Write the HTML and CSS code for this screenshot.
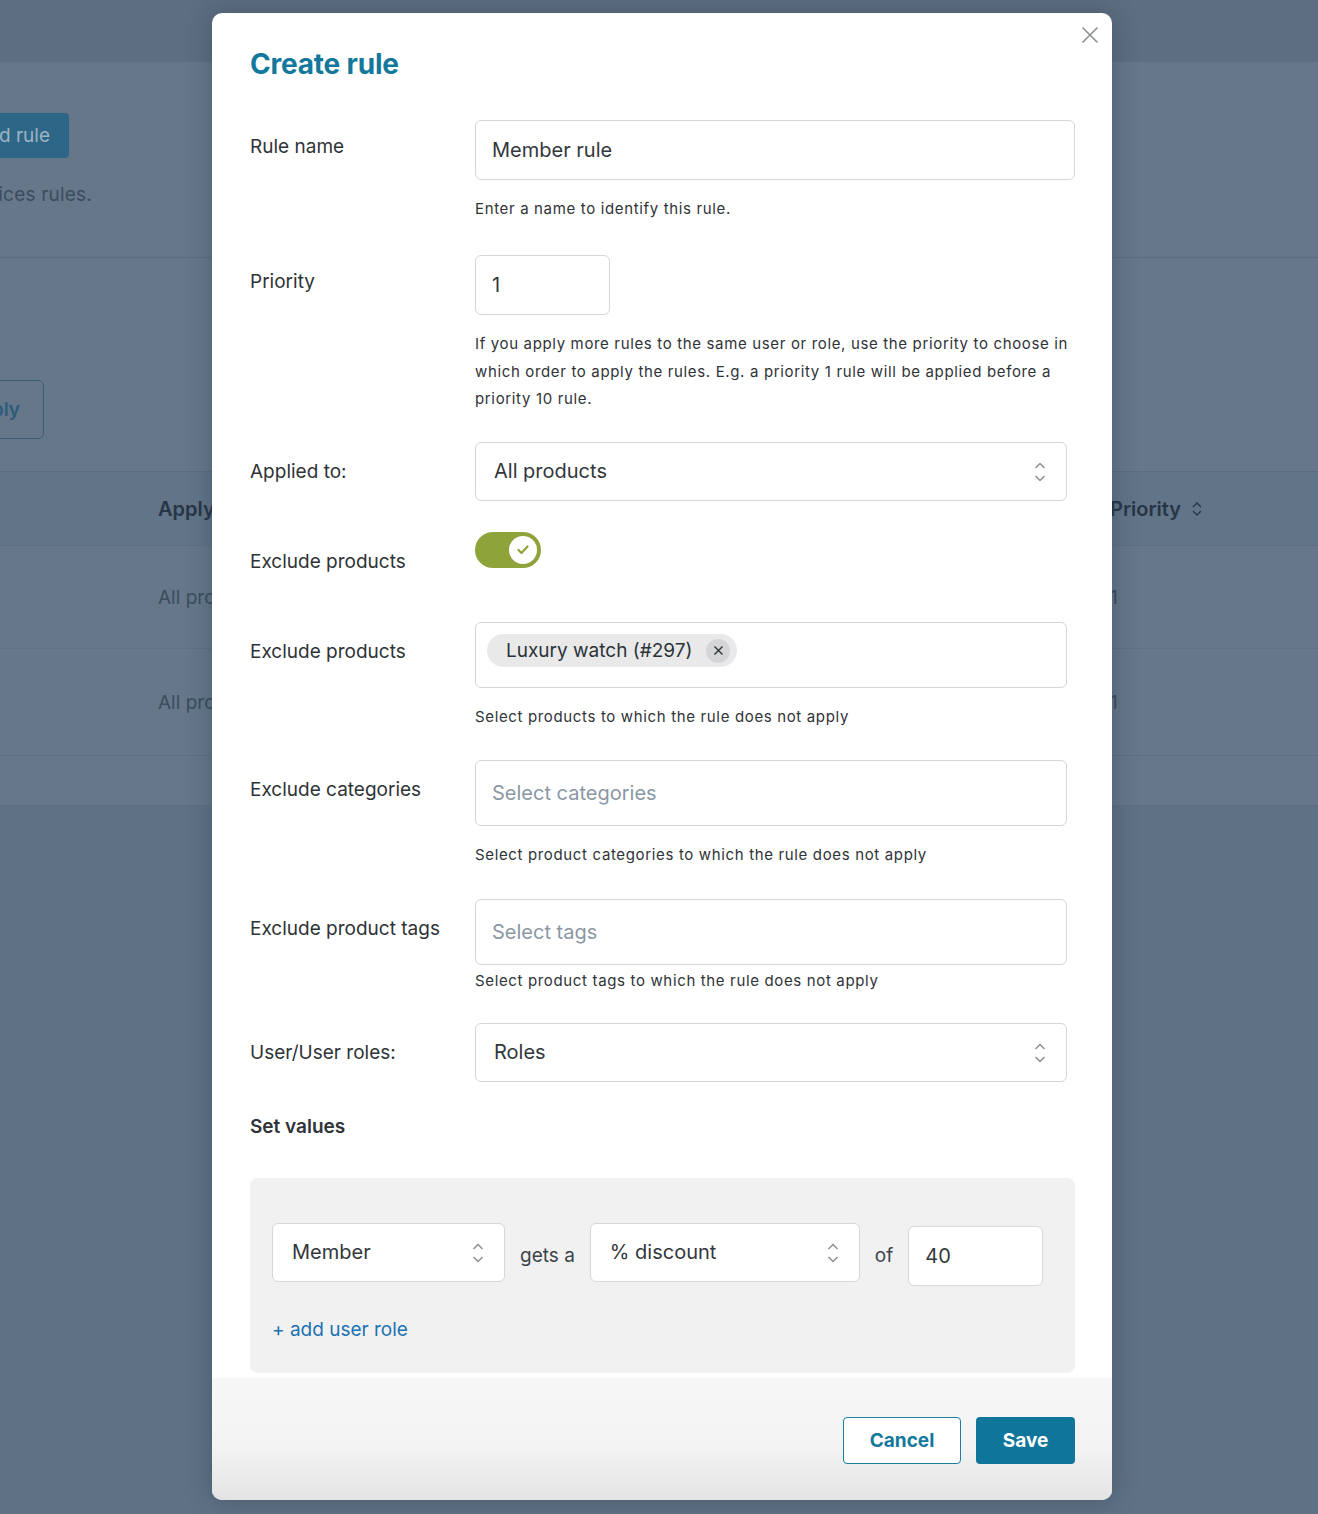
FILE: index.html
```html
<!DOCTYPE html>
<html lang="en">
<head>
    <meta charset="UTF-8">
    <title>Create rule</title>
    <link rel="stylesheet" href="styles.css">
</head>
<body>
    <div class="page">
        <div class="topbar"></div>
        <div class="intro">
            <div class="edge-box"><span class="btn-add">Add rule</span></div>
            <div class="edge-box edge-text">Manage your prices rules.</div>
        </div>
        <div class="filters">
            <div class="edge-box edge-small"><span class="btn-apply">Apply</span></div>
        </div>
        <div class="table">
            <div class="table-row table-head">
                <span class="col-apply">Apply to</span>
                <span class="col-priority">Priority
                    <svg width="12" height="16" viewBox="0 0 12 16"><path d="M2 6l4-4 4 4M2 10l4 4 4-4" fill="none" stroke="#2a3a4b" stroke-width="1.5"/></svg>
                </span>
            </div>
            <div class="table-row row-a"><span class="col-apply">All products</span><span class="col-priority">1</span></div>
            <div class="table-row row-b"><span class="col-apply">All products</span><span class="col-priority">1</span></div>
            <div class="table-row table-foot"></div>
        </div>
    </div>

    <div class="modal">
        <div class="modal-body">
            <button class="close" aria-label="Close">
                <svg width="18" height="18" viewBox="0 0 18 18"><path d="M1.5 1.5l15 15M16.5 1.5l-15 15" stroke="#8c8f94" stroke-width="1.6"/></svg>
            </button>
            <h2 class="title">Create rule</h2>

            <div class="form-row row-name">
                <label class="label label-top">Rule name</label>
                <div>
                    <div class="field field-wide">Member rule</div>
                    <p class="help">Enter a name to identify this rule.</p>
                </div>
            </div>

            <div class="form-row row-priority">
                <label class="label label-top">Priority</label>
                <div>
                    <div class="field field-small">1</div>
                    <p class="help help-long">If you apply more rules to the same user or role, use the priority to choose in which order to apply the rules. E.g. a priority 1 rule will be applied before a priority 10 rule.</p>
                </div>
            </div>

            <div class="form-row row-applied">
                <label class="label">Applied to:</label>
                <div class="field select">All products
                    <svg class="arrows" width="12" height="22" viewBox="0 0 12 22"><path d="M1.5 7l4.5-4.5 4.5 4.5M1.5 15l4.5 4.5 4.5-4.5" fill="none" stroke="#8c8f94" stroke-width="1.5"/></svg>
                </div>
            </div>

            <div class="form-row row-toggle">
                <label class="label">Exclude products</label>
                <div>
                    <span class="toggle">
                        <span class="knob">
                            <svg width="12" height="10" viewBox="0 0 12 10"><path d="M1.5 5l3 3 6-6.5" fill="none" stroke="#8ea33a" stroke-width="2.2" stroke-linecap="round" stroke-linejoin="round"/></svg>
                        </span>
                    </span>
                </div>
            </div>

            <div class="form-row">
                <label class="label">Exclude products</label>
                <div>
                    <div class="field multi">
                        <span class="chip">Luxury watch (#297)
                            <span class="chip-x">
                                <svg width="11" height="11" viewBox="0 0 11 11"><path d="M1.5 1.5l8 8M9.5 1.5l-8 8" stroke="#2c3338" stroke-width="1.4"/></svg>
                            </span>
                        </span>
                    </div>
                    <p class="help">Select products to which the rule does not apply</p>
                </div>
            </div>

            <div class="form-row row-categories">
                <label class="label">Exclude categories</label>
                <div>
                    <div class="field multi placeholder">Select categories</div>
                    <p class="help">Select product categories to which the rule does not apply</p>
                </div>
            </div>

            <div class="form-row row-tags">
                <label class="label">Exclude product tags</label>
                <div>
                    <div class="field multi placeholder">Select tags</div>
                    <p class="help help-tight">Select product tags to which the rule does not apply</p>
                </div>
            </div>

            <div class="form-row row-roles">
                <label class="label">User/User roles:</label>
                <div class="field select">Roles
                    <svg class="arrows" width="12" height="22" viewBox="0 0 12 22"><path d="M1.5 7l4.5-4.5 4.5 4.5M1.5 15l4.5 4.5 4.5-4.5" fill="none" stroke="#8c8f94" stroke-width="1.5"/></svg>
                </div>
            </div>

            <h3 class="section-title">Set values</h3>

            <div class="values">
                <div class="values-row">
                    <div class="field select select-role">Member
                        <svg class="arrows" width="12" height="22" viewBox="0 0 12 22"><path d="M1.5 7l4.5-4.5 4.5 4.5M1.5 15l4.5 4.5 4.5-4.5" fill="none" stroke="#8c8f94" stroke-width="1.5"/></svg>
                    </div>
                    <span class="values-text">gets a</span>
                    <div class="field select select-type">% discount
                        <svg class="arrows" width="12" height="22" viewBox="0 0 12 22"><path d="M1.5 7l4.5-4.5 4.5 4.5M1.5 15l4.5 4.5 4.5-4.5" fill="none" stroke="#8c8f94" stroke-width="1.5"/></svg>
                    </div>
                    <span class="values-text">of</span>
                    <div class="field field-amount">40</div>
                </div>
                <a class="add-role" href="#">+ add user role</a>
            </div>
        </div>

        <div class="modal-footer">
            <button class="btn btn-cancel">Cancel</button>
            <button class="btn btn-save">Save</button>
        </div>
    </div>
</body>
</html>
```

FILE: styles.css
```css
body {
    margin: 0;
    font-family: Inter, "Noto Sans", sans-serif;
    background-color: #5f7184;
    color: #2c3338;
}

/* page behind the overlay (already tinted) */
.page {
    overflow: hidden;
    height: 1514px;
}
.topbar {
    height: 62px;
    background-color: #5c6e80;
}
.intro {
    height: 196px;
    padding-top: 51px;
    box-sizing: border-box;
    background-color: #657789;
    border-bottom: 1px solid #5b6d7f;
}
.edge-box {
    width: 300px;
    margin-left: -231px;
    display: flex;
    justify-content: flex-end;
}
.btn-add {
    display: inline-block;
    height: 45px;
    line-height: 45px;
    padding: 0 19px;
    background-color: #2d6686;
    color: #9db3c3;
    font-size: 19px;
    border-radius: 4px;
}
.edge-text {
    width: 323px;
    margin-top: 25px;
    font-size: 19px;
    color: #3b4d5e;
    letter-spacing: 0.2px;
}
.filters {
    height: 214px;
    padding-top: 122px;
    box-sizing: border-box;
    background-color: #657789;
    border-bottom: 1px solid #5b6d7f;
}
.edge-small {
    margin-left: -256px;
}
.btn-apply {
    display: inline-block;
    height: 57px;
    line-height: 57px;
    padding: 0 23px;
    border: 1px solid #3e5b74;
    border-radius: 6px;
    color: #2d5b7b;
    font-size: 19px;
    font-weight: 600;
}
.table {
    background-color: #657789;
}
.table-row {
    display: flex;
    align-items: center;
    box-sizing: border-box;
    padding-left: 158px;
    border-bottom: 1px solid #5e7083;
    font-size: 19px;
    color: #3b4d5e;
}
.table-head {
    height: 74px;
    font-size: 20px;
    font-weight: 600;
    color: #263646;
    background-color: #627487;
}
.row-a {
    height: 103px;
}
.row-b {
    height: 107px;
}
.table-foot {
    height: 50px;
}
.col-apply {
    width: 952px;
}
.col-priority {
    display: flex;
    align-items: center;
    gap: 10px;
}

/* modal */
.modal {
    position: absolute;
    top: 13px;
    left: 212px;
    width: 900px;
    background-color: #fff;
    border-radius: 10px;
    overflow: hidden;
    box-shadow: 0 0 24px rgba(30, 45, 60, 0.35);
}
.modal-body {
    position: relative;
    padding: 34px 37px 5px 38px;
}
.close {
    position: absolute;
    top: 13px;
    right: 13px;
    padding: 0;
    border: none;
    background: none;
}
.title {
    margin: 0 0 39px;
    font-size: 28px;
    line-height: 34px;
    font-weight: 700;
    color: #13789b;
    letter-spacing: -0.2px;
}
.form-row {
    display: grid;
    grid-template-columns: 225px 1fr;
    margin-bottom: 30px;
}
.row-name {
    margin-bottom: 33px;
}
.row-priority {
    margin-bottom: 29px;
}
.row-applied {
    margin-bottom: 31px;
}
.row-toggle {
    min-height: 60px;
}
.row-categories {
    margin-bottom: 31px;
}
.row-tags {
    margin-bottom: 29px;
}
.row-roles {
    margin-bottom: 33px;
}
.label {
    padding-top: 18px;
    font-size: 19px;
    line-height: 24px;
    color: #2f3337;
}
.label-top {
    padding-top: 15px;
}
.field {
    position: relative;
    box-sizing: border-box;
    height: 59px;
    padding: 0 16px;
    display: flex;
    align-items: center;
    border: 1px solid #d4d7db;
    border-radius: 6px;
    background-color: #fff;
    font-size: 20px;
    color: #32373c;
}
.field-wide {
    height: 60px;
}
.field-small {
    width: 135px;
    height: 60px;
}
.select {
    padding-left: 18px;
    margin-right: 8px;
}
.arrows {
    position: absolute;
    right: 20px;
    top: 18px;
}
.multi {
    height: 66px;
    margin-right: 8px;
    padding-left: 11px;
}
.placeholder {
    padding-left: 16px;
    color: #8b97a4;
}
.help {
    margin: 15px 0 0;
    font-size: 15px;
    line-height: 27px;
    letter-spacing: 0.65px;
    color: #2f3337;
}
.help-long {
    line-height: 27.5px;
}
.help-tight {
    margin-top: 2px;
}
.toggle {
    display: flex;
    justify-content: flex-end;
    align-items: center;
    width: 66px;
    height: 36px;
    box-sizing: border-box;
    padding-right: 2px;
    border-radius: 18px;
    background-color: #8ea33a;
}
.knob {
    display: flex;
    justify-content: center;
    align-items: center;
    width: 32px;
    height: 32px;
    box-sizing: border-box;
    border-radius: 50%;
    background-color: #fff;
    border: 2px solid #8ea33a;
}
.chip {
    display: inline-flex;
    align-items: center;
    height: 33px;
    margin-bottom: 8px;
    padding: 0 7px 0 19px;
    gap: 14px;
    border-radius: 17px;
    background-color: #e9e9ea;
    font-size: 19px;
    color: #2c3338;
}
.chip-x {
    display: flex;
    justify-content: center;
    align-items: center;
    width: 24px;
    height: 24px;
    border-radius: 50%;
    background-color: #d5d5d8;
}
.section-title {
    margin: 0 0 39px;
    font-size: 19px;
    line-height: 24px;
    font-weight: 600;
    color: #2f3337;
}
.values {
    padding: 45px 22px 31px;
    border-radius: 8px;
    background-color: #f1f1f2;
}
.values-row {
    display: flex;
    align-items: flex-start;
}
.values-row .select {
    margin-right: 0;
    padding-left: 19px;
}
.select-role {
    width: 233px;
}
.select-type {
    width: 270px;
}
.values-text {
    padding: 0 15px;
    font-size: 19px;
    line-height: 24px;
    margin-top: 21px;
    color: #3c434a;
}
.field-amount {
    width: 135px;
    height: 60px;
    margin-top: 3px;
}
.add-role {
    display: block;
    margin-top: 32px;
    font-size: 19px;
    line-height: 24px;
    color: #2271b1;
    text-decoration: none;
}
.modal-footer {
    height: 122px;
    box-sizing: border-box;
    padding: 39px 37px 0;
    display: flex;
    justify-content: flex-end;
    gap: 15px;
    background: linear-gradient(#f7f7f7, #f3f3f3 55%, #e4e4e4);
}
.btn {
    height: 47px;
    padding: 0;
    border-radius: 4px;
    font-family: Inter, "Noto Sans", sans-serif;
    font-size: 19px;
    font-weight: 700;
    cursor: pointer;
}
.btn-cancel {
    width: 118px;
    border: 1px solid #1b7fa2;
    background-color: #fff;
    color: #13789b;
}
.btn-save {
    width: 99px;
    border: none;
    background-color: #10759b;
    color: #fff;
}
```
